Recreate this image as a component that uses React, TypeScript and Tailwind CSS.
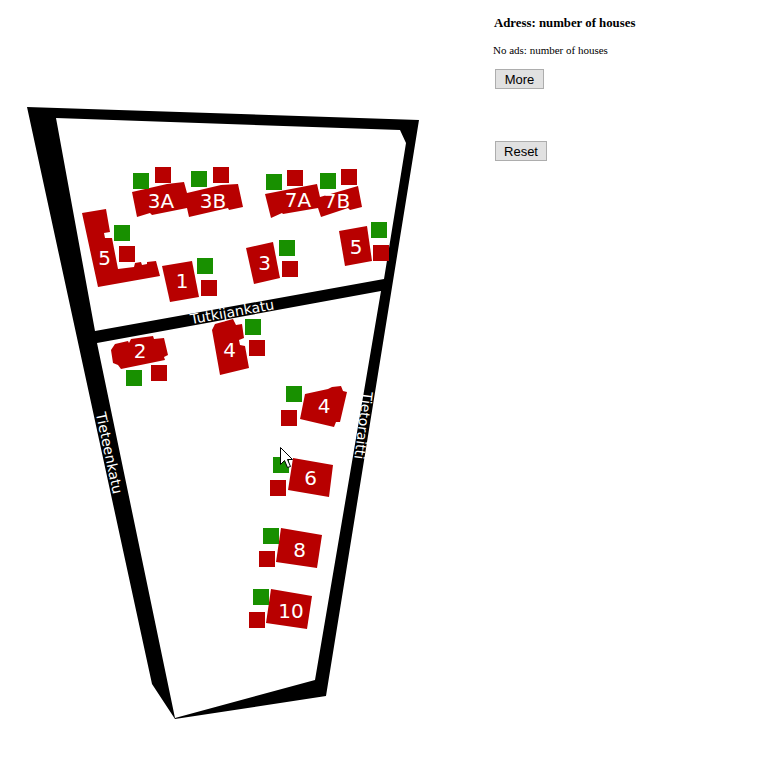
const RED = "#b80000";
const GREEN = "#189000";

const buildings = [
  "132,192 167,184 184,182 187,193 221,185 238,184 243,207 229,210 228,208 189,217 187,208 152,215 150,213 137,217",
  "265,194 317,184 320,197 358,186 362,207 350,210 348,208 321,217 318,208 283,214 282,213 271,218",
  "82,213 106,209 110,232 104,233 105,238 112,238 118,269 134,267 135,263 141,262 142,265 147,264 147,262 156,261 160,276 98,287",
  "162,266 192,261 199,297 170,302",
  "246,248 273,242 280,278 254,284",
  "339,231 367,226 372,261 345,266",
  "111,350 115,344 128,341 129,343 131,339 153,336 154,339 164,338 168,355 164,357 165,360 121,369 118,365 113,363",
  "212,330 215,324 233,319 236,325 242,324 244,338 239,340 240,345 245,346 249,368 220,375",
  "305,394 328,389 332,387 341,386 343,391 347,392 340,422 336,422 334,427 300,419",
  "293,458 333,465 329,497 288,490",
  "281,528 322,535 317,568 276,562",
  "271,589 312,596 307,629 266,623",
];

const greens = [
  [133, 173], [191, 171], [114, 225], [197, 258], [266, 174], [320, 173], [371, 222], [279, 240],
  [126, 370], [245, 319], [286, 386], [273, 457], [263, 528], [253, 589],
];

const reds = [
  [155, 167], [213, 167], [119, 246], [201, 280], [287, 170], [341, 169], [373, 245], [282, 261],
  [151, 365], [249, 340], [281, 410], [270, 480], [259, 551], [249, 612],
];

const labels: [string, number, number][] = [
  ["3A", 161, 208], ["3B", 213, 208], ["7A", 298, 207], ["7B", 337, 208], ["5", 104.5, 265],
  ["1", 182, 288], ["3", 264.5, 270], ["5", 356, 254], ["2", 140, 358], ["4", 229.5, 357],
  ["4", 324, 413], ["6", 310.5, 485], ["8", 299.5, 557], ["10", 291, 618],
];

const roads: [string, number, number, number][] = [
  ["Tutkijankatu", 233, 316.7, -10.2],
  ["Tieteenkatu", 104.5, 454, 78],
  ["Tietoraitti", 358.5, 425, 97],
];

function MapPlan() {
  return (
    <svg width="494" height="768" viewBox="0 0 494 768" className="block shrink-0 font-['DejaVu_Sans',sans-serif]">
      <path
        fill="#000"
        fillRule="evenodd"
        d="M27 107 L419 120 L326 696 L175 719 L152 684 Z M56 118 L400 130 L406 143 L384 279 L95 331 Z M97 343 L381 291 L315 680 L175 718 Z"
      />
      {buildings.map((p) => (
        <polygon key={p} points={p} fill={RED} />
      ))}
      {greens.map(([x, y]) => (
        <rect key={`${x}-${y}`} x={x} y={y} width="16" height="16" fill={GREEN} />
      ))}
      {reds.map(([x, y]) => (
        <rect key={`${x}-${y}`} x={x} y={y} width="16" height="16" fill={RED} />
      ))}
      {labels.map(([t, x, y]) => (
        <text key={`${t}-${x}`} x={x} y={y} textAnchor="middle" fontSize="20" fill="#fff">
          {t}
        </text>
      ))}
      {roads.map(([t, x, y, r]) => (
        <text key={t} x={x} y={y} textAnchor="middle" fontSize="14" fill="#fff" transform={`rotate(${r} ${x} ${y})`}>
          {t}
        </text>
      ))}
      <path
        d="M280.5 447.5 V464.5 L284.5 460.5 L287.5 467.5 L290.5 466.5 L287.5 459.5 L292.5 459.5 Z"
        fill="#fff"
        stroke="#000"
        strokeWidth="1"
      />
    </svg>
  );
}

export default function App() {
  return (
    <div className="flex w-[768px] h-[768px] bg-white text-black font-['Liberation_Serif',serif]">
      <MapPlan />
      <div className="flex flex-col items-start">
        <h1 className="mt-[16px] text-[12.8px] leading-[14px] font-bold">Adress: number of houses</h1>
        <p className="mt-[14px] -ml-px text-[11px] leading-[12px]">No ads: number of houses</p>
        <button className="mt-[13px] ml-px w-[49px] h-[20px] bg-[#e1e1e1] border border-[#adadad] text-[13px] leading-none text-black font-['Liberation_Sans',sans-serif]">
          More
        </button>
        <button className="mt-[52px] ml-px w-[52px] h-[20px] bg-[#e1e1e1] border border-[#adadad] text-[13px] leading-none text-black font-['Liberation_Sans',sans-serif]">
          Reset
        </button>
      </div>
    </div>
  );
}
